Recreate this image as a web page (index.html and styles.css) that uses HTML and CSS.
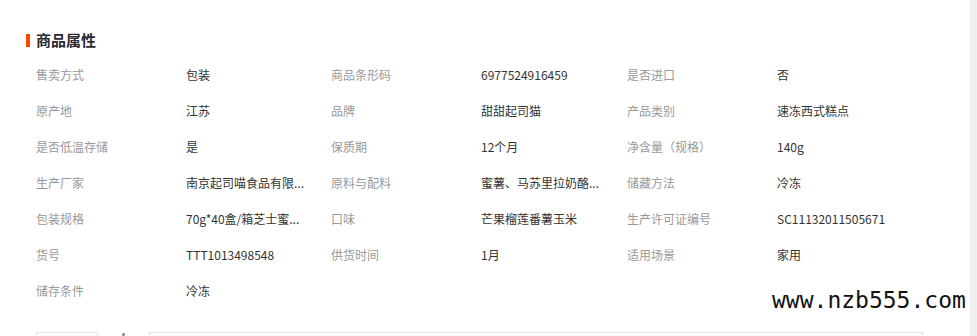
FILE: index.html
```html
<!DOCTYPE html>
<html lang="zh-CN">
<head>
<meta charset="utf-8">
<title>商品属性</title>
<link rel="stylesheet" href="styles.css">
</head>
<body>
<div class="page">
  <h2 class="section-title"><span class="title-bar"></span>商品属性</h2>
  <div class="attr-grid">
    <div class="label">售卖方式</div><div class="value">包装</div>
    <div class="label">商品条形码</div><div class="value">6977524916459</div>
    <div class="label">是否进口</div><div class="value">否</div>

    <div class="label">原产地</div><div class="value">江苏</div>
    <div class="label">品牌</div><div class="value">甜甜起司猫</div>
    <div class="label">产品类别</div><div class="value">速冻西式糕点</div>

    <div class="label">是否低温存储</div><div class="value">是</div>
    <div class="label">保质期</div><div class="value">12个月</div>
    <div class="label">净含量（规格）</div><div class="value">140g</div>

    <div class="label">生产厂家</div><div class="value">南京起司喵食品有限...</div>
    <div class="label">原料与配料</div><div class="value">蜜薯、马苏里拉奶酪...</div>
    <div class="label">储藏方法</div><div class="value">冷冻</div>

    <div class="label">包装规格</div><div class="value">70g*40盒/箱芝士蜜...</div>
    <div class="label">口味</div><div class="value">芒果榴莲番薯玉米</div>
    <div class="label">生产许可证编号</div><div class="value">SC11132011505671</div>

    <div class="label">货号</div><div class="value">TTT1013498548</div>
    <div class="label">供货时间</div><div class="value">1月</div>
    <div class="label">适用场景</div><div class="value">家用</div>

    <div class="label">储存条件</div><div class="value">冷冻</div>
  </div>
  <div class="bottom-row">
    <div class="box box-small"></div>
    <span class="mini-icon"></span>
    <div class="box box-wide"></div>
  </div>
  <div class="watermark">www.nzb555.com</div>
</div>
</body>
</html>
```
FILE: styles.css
```css
html, body {
  margin: 0;
  padding: 0;
}
body {
  background: #f0f0f0;
  font-family: "Noto Sans CJK SC", "Noto Sans", sans-serif;
  overflow: hidden;
}
.page {
  position: relative;
  width: 970px;
  height: 336px;
  background: #fff;
  overflow: hidden;
}
.section-title {
  display: flex;
  align-items: center;
  margin: 0;
  padding: 30px 0 0 26px;
  height: 20px;
  line-height: 20px;
  font-size: 15px;
  font-weight: bold;
  color: #2b2b33;
}
.title-bar {
  display: inline-block;
  width: 4px;
  height: 13px;
  background: #ff4400;
  margin-right: 6px;
}
.attr-grid {
  display: grid;
  grid-template-columns: 150px 145px 150px 146px 150px 1fr;
  grid-auto-rows: 36px;
  margin: 7px 0 0 36px;
  font-size: 12px;
  line-height: 36px;
}
.label {
  color: #999;
  white-space: nowrap;
}
.value {
  color: #333;
  white-space: nowrap;
}
.bottom-row {
  display: flex;
  align-items: flex-start;
  margin: 23px 0 0 36px;
}
.box {
  height: 30px;
  border: 1px solid #e3e3e3;
  box-sizing: border-box;
}
.box-small {
  width: 62px;
}
.mini-icon {
  width: 3px;
  height: 3px;
  margin: 1px 24px 0 24px;
  background: #8a94a8;
  border-radius: 1px;
}
.box-wide {
  width: 774px;
}
.watermark {
  position: absolute;
  left: 772px;
  top: 287px;
  font-family: "DejaVu Sans Mono", "Liberation Mono", monospace;
  font-size: 23px;
  line-height: 26px;
  color: #111;
  white-space: nowrap;
}
```
